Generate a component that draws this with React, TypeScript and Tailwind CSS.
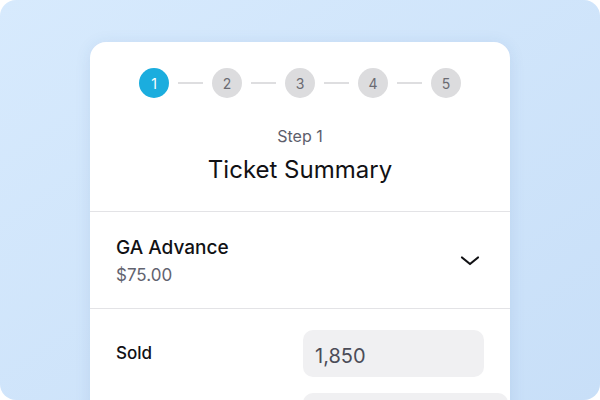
import React from "react";

const steps = [1, 2, 3, 4, 5];

export default function App() {
  return (
    <div
      className="w-[600px] h-[400px] overflow-hidden rounded-2xl bg-gradient-to-br from-[#d7eafd] to-[#c8dff8] pt-[42px] px-[90px]"
      style={{ fontFamily: "Inter, 'Noto Sans', sans-serif" }}
    >
      <div className="w-[420px] rounded-2xl bg-white shadow-[0_2px_16px_rgba(40,90,150,0.10)]">
        <div className="flex items-center justify-center gap-[9px] pt-[26px]">
          {steps.map((s, i) => (
            <React.Fragment key={s}>
              <div
                className={
                  s === 1
                    ? "flex h-[30px] w-[30px] items-center justify-center rounded-full bg-[#1badde] text-[14px] text-white"
                    : "flex h-[30px] w-[30px] items-center justify-center rounded-full bg-[#dcdcde] text-[14px] text-[#6b6b72]"
                }
              >
                {s}
              </div>
              {i < steps.length - 1 && <div className="h-[2px] w-[25px] bg-[#dedee0]" />}
            </React.Fragment>
          ))}
        </div>
        <div className="mt-[26px] text-center text-[16px] leading-[24px] text-[#5d5e6b]">Step 1</div>
        <div className="mt-[6px] text-center text-[24px] leading-[32px] text-[#111114]">Ticket Summary</div>
        <div className="mt-[25px] h-px bg-[#e3e3e6]" />
        <div className="flex items-center justify-between pl-[26px] pr-[30px] pt-[22px] pb-[21px]">
          <div>
            <div className="text-[19px] leading-[28px] font-medium text-[#111114]">GA Advance</div>
            <div className="mt-[1px] text-[17px] leading-[24px] text-[#62636f]">$75.00</div>
          </div>
          <svg width="20" height="12" viewBox="0 0 20 12" fill="none">
            <path d="M2 2.5 L10 9 L18 2.5" stroke="#111114" strokeWidth="2.2" strokeLinecap="round" strokeLinejoin="round" />
          </svg>
        </div>
        <div className="h-px bg-[#e3e3e6]" />
        <div className="flex flex-col gap-[16px] pt-[21px] pl-[26px] pb-[30px]">
          <div className="flex items-center">
            <div className="w-[187px] text-[17px] font-medium text-[#111114]">Sold</div>
            <div className="flex h-[47px] w-[181px] items-center rounded-[10px] bg-[#f0f0f2] pl-[12px] pt-[4px] text-[20px] leading-[28px] text-[#4b4c58]">
              1,850
            </div>
          </div>
          <div className="flex items-center">
            <div className="w-[187px]" />
            <div className="h-[47px] w-[205px] rounded-[10px] bg-[#f0f0f2]" />
          </div>
        </div>
      </div>
    </div>
  );
}
